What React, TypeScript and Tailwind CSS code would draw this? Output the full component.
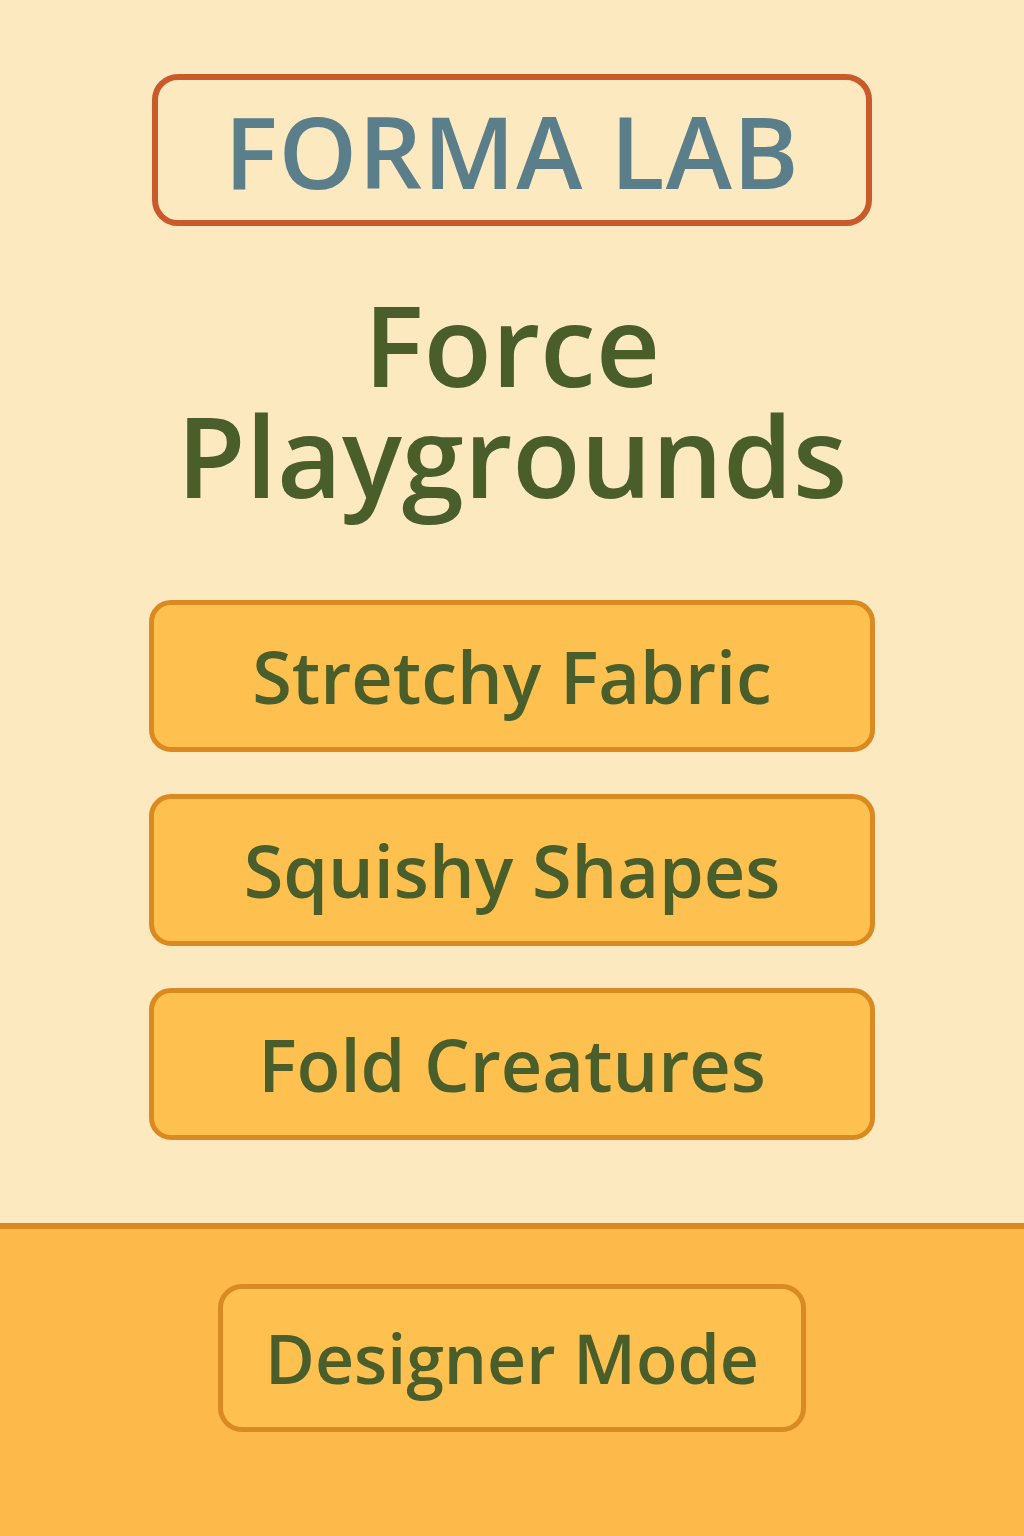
import React from 'react';

const modes = ['Stretchy Fabric', 'Squishy Shapes', 'Fold Creatures'];

export default function App() {
  return (
    <div
      className="w-[1024px] h-[1536px] flex flex-col bg-[#fde9c0]"
      style={{ fontFamily: '"Open Sans", "Noto Sans", sans-serif' }}
    >
      <main className="flex-1 flex flex-col items-center pt-[74px]">
        <div className="w-[720px] h-[152px] rounded-[26px] border-[6px] border-[#c85a2b] flex items-center justify-center">
          <h1 className="text-[100px] leading-none font-semibold text-[#5a7f8b] tracking-[1px]">FORMA LAB</h1>
        </div>

        <h2 className="mt-[62px] flex flex-col items-center text-[112px] leading-[111px] font-semibold text-[#4a5e2b]">
          <span>Force</span>
          <span>Playgrounds</span>
        </h2>

        <div className="mt-[90px] flex flex-col gap-[42px]">
          {modes.map((m) => (
            <button
              key={m}
              className="w-[726px] h-[152px] rounded-[22px] border-[5px] border-[#da8a20] bg-[#fec14f] flex items-center justify-center"
            >
              <span className="text-[72px] leading-none font-semibold text-[#4a5e2b]">{m}</span>
            </button>
          ))}
        </div>
      </main>

      <footer className="h-[313px] border-t-[6px] border-[#d9891f] bg-[#fdb94a] flex justify-center pt-[55px]">
        <button className="w-[588px] h-[148px] rounded-[24px] border-[5px] border-[#d98a22] bg-[#fec14f] flex items-center justify-center">
          <span className="text-[68px] leading-none font-semibold text-[#4a5e2b]">Designer Mode</span>
        </button>
      </footer>
    </div>
  );
}
